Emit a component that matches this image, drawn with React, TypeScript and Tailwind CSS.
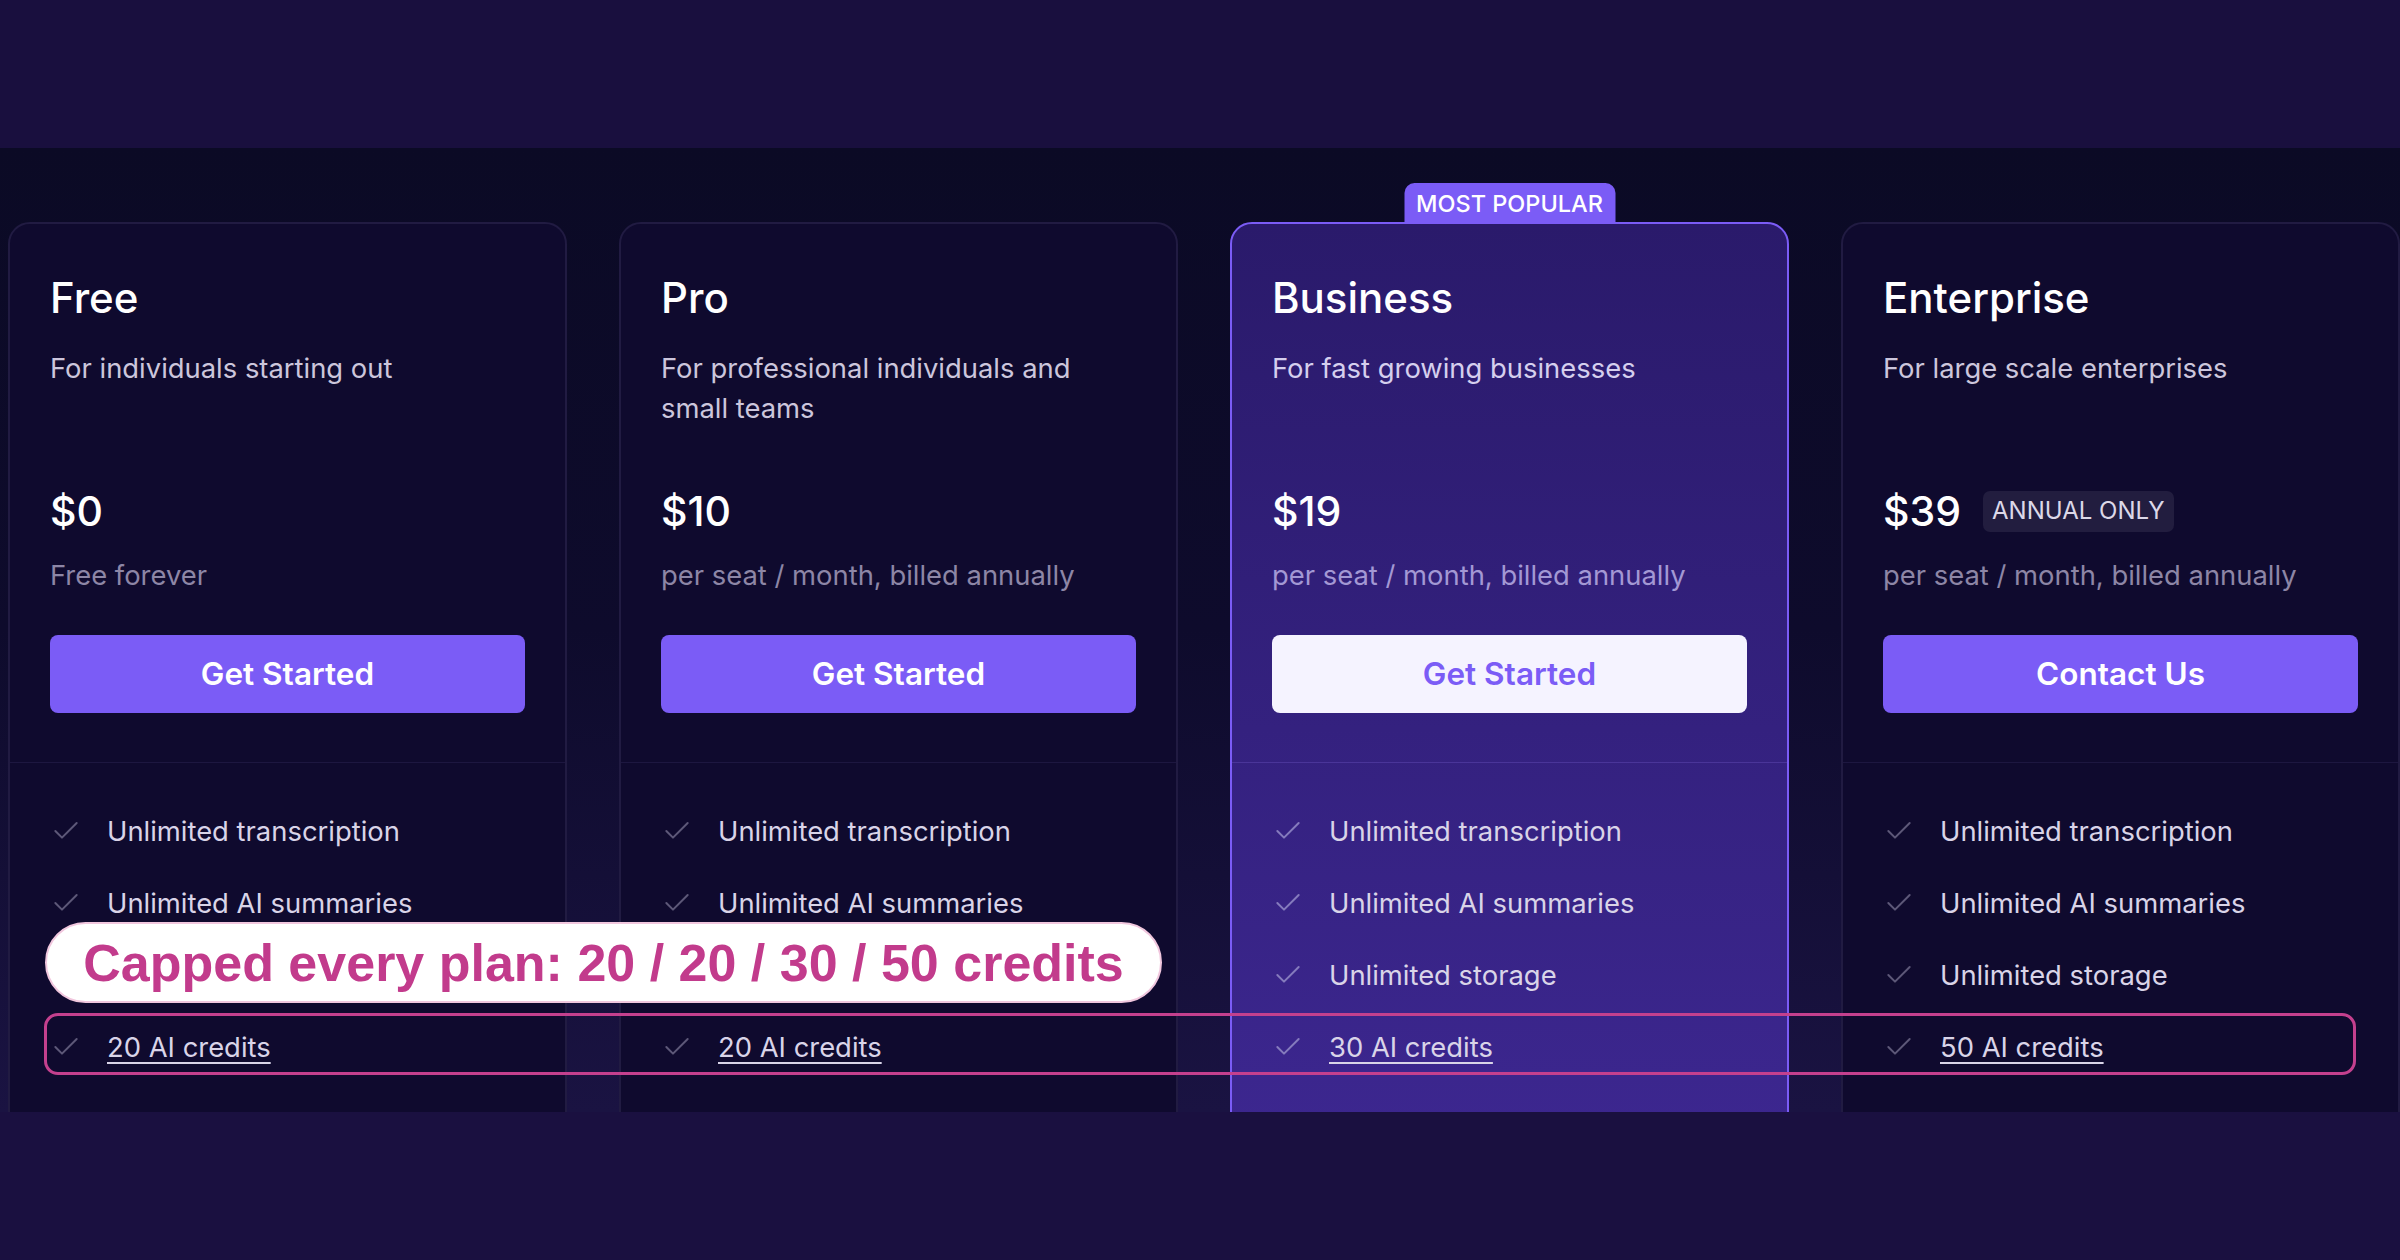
import { Check } from 'lucide-react';

interface Plan {
  name: string;
  description: string;
  price: string;
  note: string;
  cta: string;
  credits: string;
  popular?: boolean;
  annualOnly?: boolean;
  storageHidden?: boolean;
}

const PLANS: Plan[] = [
  {
    name: 'Free',
    description: 'For individuals starting out',
    price: '$0',
    note: 'Free forever',
    cta: 'Get Started',
    credits: '20 AI credits',
    storageHidden: true,
  },
  {
    name: 'Pro',
    description: 'For professional individuals and small teams',
    price: '$10',
    note: 'per seat / month, billed annually',
    cta: 'Get Started',
    credits: '20 AI credits',
    storageHidden: true,
  },
  {
    name: 'Business',
    description: 'For fast growing businesses',
    price: '$19',
    note: 'per seat / month, billed annually',
    cta: 'Get Started',
    credits: '30 AI credits',
    popular: true,
  },
  {
    name: 'Enterprise',
    description: 'For large scale enterprises',
    price: '$39',
    note: 'per seat / month, billed annually',
    cta: 'Contact Us',
    credits: '50 AI credits',
    annualOnly: true,
  },
];

function FeatureRow({
  label,
  popular,
  underline,
  hidden,
}: {
  label: string;
  popular?: boolean;
  underline?: boolean;
  hidden?: boolean;
}) {
  return (
    <li className={hidden ? 'flex items-center gap-[25px] h-[40px] invisible' : 'flex items-center gap-[25px] h-[40px]'}>
      <Check
        size={32}
        strokeWidth={1.5}
        className={popular ? 'text-[#857bbd] shrink-0' : 'text-[#5d5878] shrink-0'}
      />
      <span
        className={
          underline
            ? 'text-[27.4px] leading-[40px] text-[#d9d4e8] underline underline-offset-[5px] decoration-2'
            : 'text-[27.4px] leading-[40px] text-[#d9d4e8]'
        }
      >
        {label}
      </span>
    </li>
  );
}

function PlanCard({ plan }: { plan: Plan }) {
  const popular = plan.popular;
  return (
    <div
      className={
        popular
          ? 'relative w-[559px] h-[1000px] shrink-0 rounded-[22px] border-2 border-[#7b5cf6] bg-linear-to-b from-[#2a1a6b] to-[#3e2893]'
          : 'relative w-[559px] h-[1000px] shrink-0 rounded-[22px] border-2 border-[#211b42] bg-[#0f0a2e]'
      }
    >
      {popular && (
        <div className="absolute -top-[41px] left-1/2 -translate-x-1/2 w-[211px] h-[41px] rounded-t-[10px] bg-[#7b5cf6] flex items-center justify-center text-[23.5px] font-medium text-white">
          MOST POPULAR
        </div>
      )}

      {/* header */}
      <div
        className={
          popular
            ? 'px-10 pt-[49px] pb-[49px] border-b border-[#4a3599]'
            : 'px-10 pt-[49px] pb-[49px] border-b border-[#1d1740]'
        }
      >
        <h3 className="text-[42px] leading-[50px] font-medium text-white">{plan.name}</h3>
        <p
          className={
            popular
              ? 'mt-[25px] h-[139px] text-[27.4px] leading-[40px] text-[#d5cfee]'
              : 'mt-[25px] h-[139px] text-[27.4px] leading-[40px] text-[#ccc6dc]'
          }
        >
          {plan.description}
        </p>
        <div className="flex items-center gap-[22px] h-[48px]">
          <span className="text-[41px] leading-[48px] font-medium text-white">{plan.price}</span>
          {plan.annualOnly && (
            <span className="h-[41px] px-[9px] flex items-center rounded-[7px] bg-[#221d3f] text-[24px] text-[#dcd8e8]">
              ANNUAL ONLY
            </span>
          )}
        </div>
        <p
          className={
            popular
              ? 'mt-[20px] text-[27.4px] leading-[40px] text-[#a398d4]'
              : 'mt-[20px] text-[27.4px] leading-[40px] text-[#8d86a6]'
          }
        >
          {plan.note}
        </p>
        <button
          className={
            popular
              ? 'mt-[40px] w-full h-[78px] rounded-[8px] bg-[#f5f3ff] text-[31.5px] font-semibold text-[#7b5cf6]'
              : 'mt-[40px] w-full h-[78px] rounded-[8px] bg-[#7b5cf6] text-[31.5px] font-semibold text-white'
          }
        >
          {plan.cta}
        </button>
      </div>

      {/* features */}
      <ul className="px-10 pt-[48px] flex flex-col gap-[32px]">
        <FeatureRow label="Unlimited transcription" popular={popular} />
        <FeatureRow label="Unlimited AI summaries" popular={popular} />
        <FeatureRow label="Unlimited storage" popular={popular} hidden={plan.storageHidden} />
        <FeatureRow label={plan.credits} popular={popular} underline />
      </ul>
    </div>
  );
}

export default function App() {
  return (
    <div className="w-[2400px] h-[1260px] flex flex-col overflow-hidden bg-[#190f3e] font-['Inter','Noto_Sans',sans-serif]">
      <div className="h-[148px] shrink-0 bg-[#190f3e]" />

      <section className="relative h-[964px] shrink-0 overflow-hidden bg-linear-to-b from-[#0b0a25] via-[#0e0b2c] to-[#1a1342] pl-2 pt-[74px]">
        <div className="flex gap-[52px]">
          {PLANS.map((plan) => (
            <PlanCard key={plan.name} plan={plan} />
          ))}
        </div>

        {/* annotation: credits row highlight */}
        <div className="absolute left-[44px] top-[865px] w-[2312px] h-[62px] rounded-[14px] border-[3px] border-[#c4408e]" />

        {/* annotation: label pill */}
        <div className="absolute left-[45px] top-[774px] w-[1117px] h-[81px] rounded-full border-2 border-[#f1c7de] bg-white flex items-center justify-center">
          <span className="font-['Liberation_Sans',Arial,sans-serif] font-bold text-[52px] leading-none text-[#c23b8c]">
            Capped every plan: 20 / 20 / 30 / 50 credits
          </span>
        </div>
      </section>

      <div className="flex-1 bg-[#1a1040]" />
    </div>
  );
}
